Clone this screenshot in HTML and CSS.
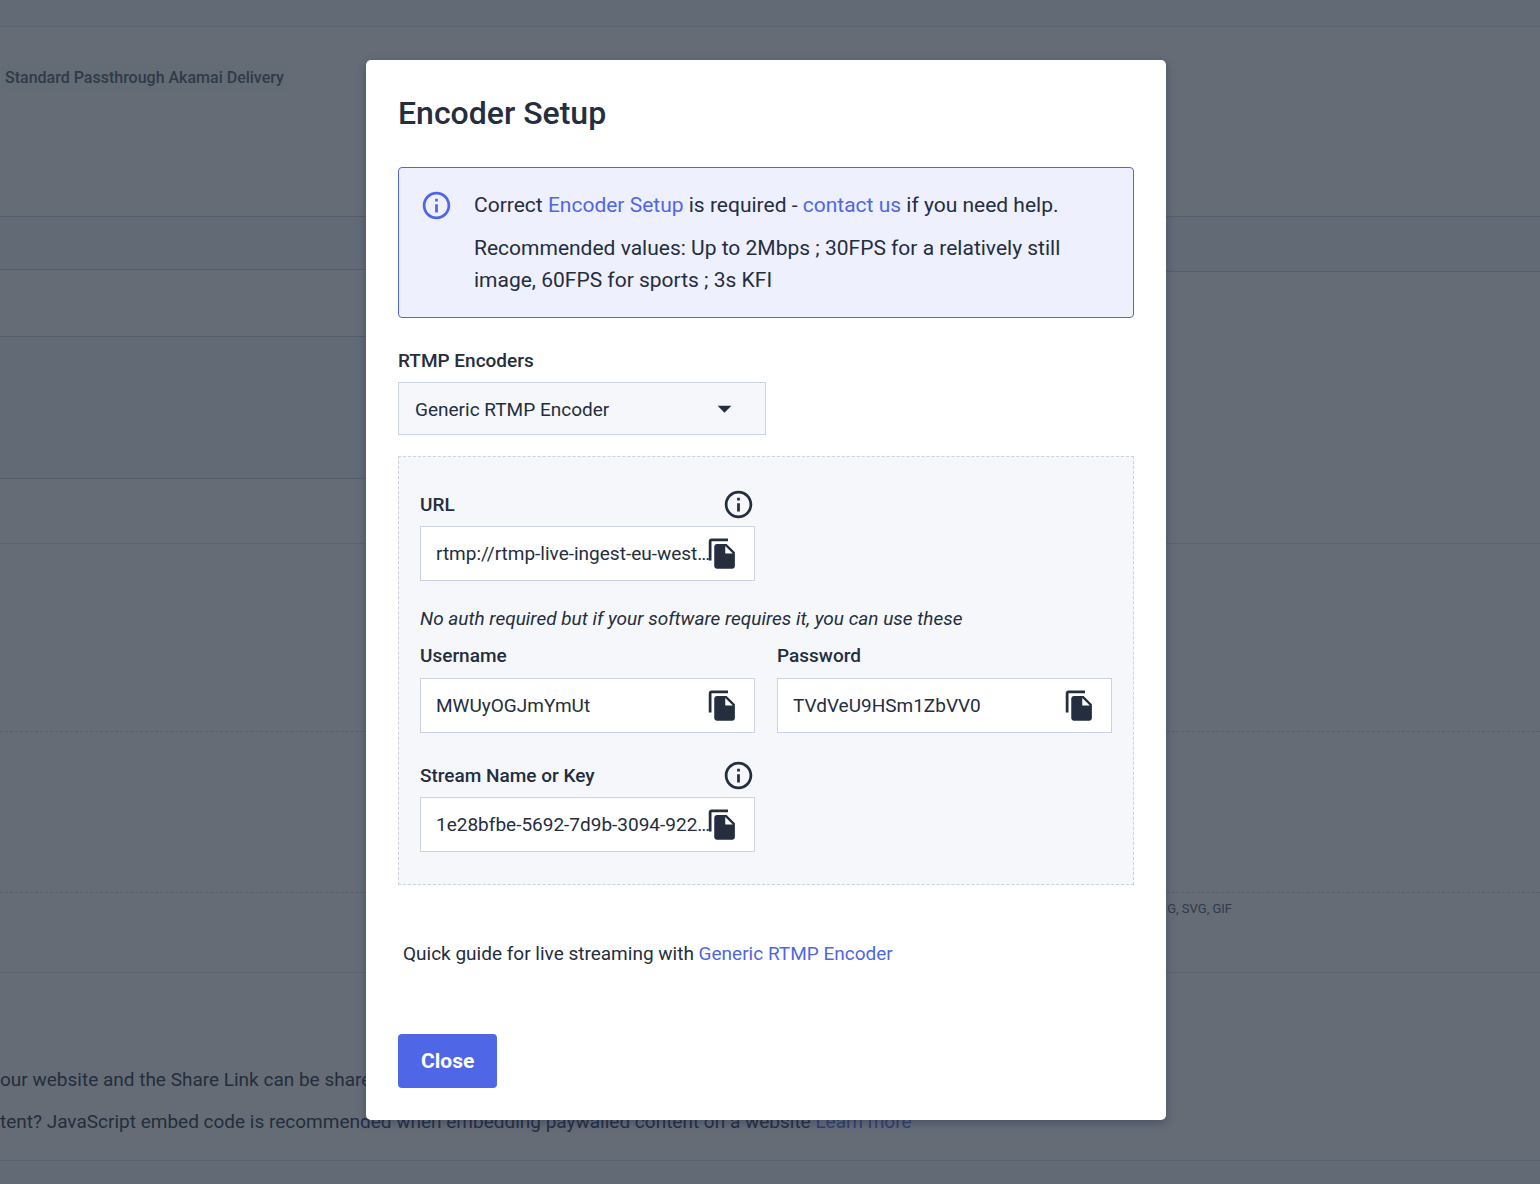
FILE: index.html
```html
<!DOCTYPE html>
<html lang="en">
<head>
  <meta charset="UTF-8">
  <meta name="viewport" content="width=device-width, initial-scale=1.0">
  <title>Encoder Setup</title>
  <link rel="stylesheet" href="styles.css">
</head>
<body>
  <svg class="sprite" aria-hidden="true">
    <symbol id="icon-info" viewBox="0 0 24 24">
      <path d="M11 7h2v2h-2zm0 4h2v6h-2zm1-9C6.48 2 2 6.48 2 12s4.480 10 10 10 10-4.480 10-10S17.520 2 12 2zm0 18c-4.410 0-8-3.590-8-8s3.590-8 8-8 8 3.590 8 8-3.590 8-8 8z"/>
    </symbol>
    <symbol id="icon-copy" viewBox="0 0 24 24">
      <path d="M16 1H4c-1.100 0-2 .9-2 2v14h2V3h12V1zm-1 4l6 6v10c0 1.100-.9 2-2 2H7.990C6.890 23 6 22.100 6 21l.01-14c0-1.100.89-2 1.990-2h7zm-1 7h5.500L14 6.500V12z"/>
    </symbol>
  </svg>

  <main class="page">
    <div class="topbar"></div>
    <section class="delivery">
      <span class="tag">Standard Passthrough Akamai Delivery</span>
    </section>
    <div class="columns">
      <div class="column">
        <div class="column-head"></div>
        <div class="column-row"></div>
        <div class="column-row selected"></div>
      </div>
      <div class="column">
        <div class="column-head tall"></div>
      </div>
    </div>
    <div class="settings"></div>
    <div class="upload"></div>
    <div class="formats">G, SVG, GIF</div>
    <section class="embed">
      <p>our website and the Share Link can be shared</p>
      <p>tent? JavaScript embed code is recommended when embedding paywalled content on a website <a href="#">Learn more</a></p>
    </section>
  </main>

  <div class="overlay">
    <div class="modal" role="dialog" aria-labelledby="modal-title">
      <h1 id="modal-title">Encoder Setup</h1>

      <div class="alert">
        <svg class="icon"><use href="#icon-info"/></svg>
        <div class="alert-text">
          <p>Correct <a href="#">Encoder Setup</a> is required - <a href="#">contact us</a> if you need help.</p>
          <p>Recommended values: Up to 2Mbps ; 30FPS for a relatively still image, 60FPS for sports ; 3s KFI</p>
        </div>
      </div>

      <label class="label" for="encoder">RTMP Encoders</label>
      <div class="select">
        <select id="encoder">
          <option>Generic RTMP Encoder</option>
        </select>
        <svg class="icon caret" viewBox="0 0 24 24"><path d="M7 10l5 5 5-5z"/></svg>
      </div>

      <div class="panel">
        <div class="field">
          <div class="field-head">
            <label class="label" for="url">URL</label>
            <button class="icon-button" type="button" aria-label="About URL"><svg class="icon"><use href="#icon-info"/></svg></button>
          </div>
          <div class="copy-box">
            <input type="text" id="url" value="rtmp://rtmp-live-ingest-eu-west…" readonly>
            <button class="icon-button" type="button" aria-label="Copy URL"><svg class="icon"><use href="#icon-copy"/></svg></button>
          </div>
        </div>

        <p class="note">No auth required but if your software requires it, you can use these</p>

        <div class="field">
          <label class="label" for="username">Username</label>
          <div class="copy-box">
            <input type="text" id="username" value="MWUyOGJmYmUt" readonly>
            <button class="icon-button" type="button" aria-label="Copy username"><svg class="icon"><use href="#icon-copy"/></svg></button>
          </div>
        </div>
        <div class="field">
          <label class="label" for="password">Password</label>
          <div class="copy-box">
            <input type="text" id="password" value="TVdVeU9HSm1ZbVV0" readonly>
            <button class="icon-button" type="button" aria-label="Copy password"><svg class="icon"><use href="#icon-copy"/></svg></button>
          </div>
        </div>

        <div class="field stream">
          <div class="field-head">
            <label class="label" for="stream">Stream Name or Key</label>
            <button class="icon-button" type="button" aria-label="About stream name or key"><svg class="icon"><use href="#icon-info"/></svg></button>
          </div>
          <div class="copy-box">
            <input type="text" id="stream" value="1e28bfbe-5692-7d9b-3094-922…" readonly>
            <button class="icon-button" type="button" aria-label="Copy stream name or key"><svg class="icon"><use href="#icon-copy"/></svg></button>
          </div>
        </div>
      </div>

      <p class="guide">Quick guide for live streaming with <a href="#">Generic RTMP Encoder</a></p>

      <button class="close" type="button">Close</button>
    </div>
  </div>
</body>
</html>
```

FILE: styles.css
```css
* {
  box-sizing: border-box;
}
body {
  margin: 0;
  font-family: Roboto, "Liberation Sans", sans-serif;
  font-size: 19px;
  line-height: 27px;
  color: #242e3e;
  background: #f6f8fa;
}
h1, p {
  margin: 0;
}
a {
  color: #4f67e6;
  text-decoration: none;
}
.sprite {
  display: none;
}
.icon {
  display: block;
  flex: none;
  width: 33px;
  height: 33px;
  fill: currentColor;
}

/* page behind the dialog */
.page {
  background: #fff;
  overflow: hidden;
}
.topbar {
  height: 27px;
  background: #f6f8fa;
  border-bottom: 1px solid #dde2ee;
}
.delivery {
  height: 189px;
  padding: 36px 1px;
}
.tag {
  display: inline-block;
  padding: 0 4px;
  font-size: 16px;
  font-weight: 500;
  color: #4b596c;
  background: #f9fafb;
  border-radius: 4px;
}
.columns {
  display: grid;
  grid-template-columns: 1fr 1fr;
  border-top: 1px solid #c9d1e1;
  border-bottom: 1px solid #dde2ee;
  height: 328px;
}
.column-head {
  height: 53px;
  background: #f6f8fa;
  border-bottom: 1px solid #c9d1e1;
}
.column-head.tall {
  height: 55px;
}
.column-row {
  height: 67px;
  border-bottom: 1px solid #c9d1e1;
}
.column-row.selected {
  height: 142px;
  background: #f6f8fa;
}
.settings {
  height: 188px;
  border-bottom: 1px dashed #c9d1e1;
}
.upload {
  height: 161px;
  border-bottom: 1px dashed #c9d1e1;
}
.formats {
  height: 80px;
  padding: 2px 20% 0 0;
  font-size: 13px;
  text-align: right;
  color: #4b596c;
  border-bottom: 1px solid #dde2ee;
}
.embed {
  height: 188px;
  padding-top: 93px;
  white-space: nowrap;
  border-bottom: 1px solid #dde2ee;
}
.embed p + p {
  margin-top: 15px;
}

/* dialog */
.overlay {
  position: absolute;
  top: 0;
  left: 0;
  width: 100%;
  min-height: 100%;
  padding: 60px 8px 60px 0;
  background: rgba(36, 46, 60, 0.7);
}
.modal {
  max-width: 800px;
  margin: 0 auto;
  padding: 32px;
  background: #fff;
  border-radius: 5px;
  box-shadow: 0 3px 8px rgba(36, 46, 80, 0.4);
}
h1 {
  font-size: 32px;
  font-weight: 500;
  line-height: 42px;
  margin-bottom: 33px;
}
.alert {
  display: flex;
  gap: 21px;
  padding: 21px;
  margin-bottom: 29px;
  font-size: 21px;
  line-height: 32px;
  background: #eef0fd;
  border: 1px solid #4f67e6;
  border-radius: 4px;
}
.alert .icon {
  color: #4f67e6;
}
.alert-text p + p {
  margin-top: 11px;
}
.label {
  display: block;
  font-weight: 500;
}
.select {
  position: relative;
  width: 50%;
  margin: 8px 0 21px;
}
select {
  display: block;
  width: 100%;
  height: 53px;
  padding: 2px 16px 0;
  font: inherit;
  color: inherit;
  background: #f5f7fb;
  border: 1px solid #cbd3e3;
  border-radius: 0;
  appearance: none;
}
.caret {
  position: absolute;
  top: 10px;
  right: 25px;
  pointer-events: none;
}
.panel {
  display: grid;
  grid-template-columns: 1fr 1fr;
  column-gap: 22px;
  padding: 31px 21px 32px;
  background: #f5f7fb;
  border: 1px dashed #cbd3e3;
}
.field {
  grid-column-end: span 1;
}
.field > .label {
  margin-bottom: 9px;
}
.field-head {
  display: flex;
  align-items: center;
  justify-content: space-between;
  margin-bottom: 5px;
}
.copy-box {
  display: flex;
  align-items: center;
  height: 55px;
  padding: 0 15px;
  background: #fff;
  border: 1px solid #cbd3e3;
}
/* the copy icon has 3px of empty space on its left, the value may run into it */
.copy-box input {
  flex: 1;
  min-width: 0;
  margin-right: -3px;
  padding: 0;
  font: inherit;
  color: inherit;
  background: none;
  border: none;
  outline: none;
}
.icon-button {
  padding: 0;
  color: inherit;
  background: none;
  border: none;
  cursor: pointer;
}
.note {
  grid-column: 1 / -1;
  margin: 24px 0 10px;
  font-style: italic;
}
.stream {
  grid-column: 1;
  margin-top: 26px;
}
.guide {
  margin: 55px 5px 67px;
}
.close {
  display: block;
  height: 54px;
  padding: 0 23px;
  font: inherit;
  font-size: 21px;
  font-weight: 700;
  color: #fff;
  background: #4f67e6;
  border: none;
  border-radius: 4px;
  cursor: pointer;
}
```
